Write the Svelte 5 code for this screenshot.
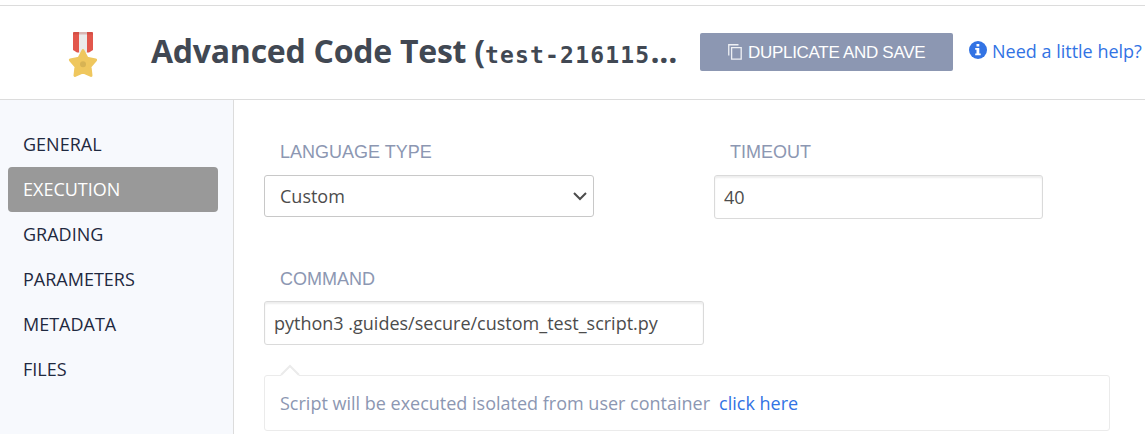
<script>
  const sections = ['GENERAL', 'EXECUTION', 'GRADING', 'PARAMETERS', 'METADATA', 'FILES'];
  let active = $state('EXECUTION');
</script>

<div class="page">
  <header>
    <svg class="medal" width="30" height="46" viewBox="0 0 30 46">
      <path d="M6 0H24Q25 0 25 1V18L21 20.5H9L5 18V1Q5 0 6 0Z" fill="#e2574c" />
      <path d="M11 0H19V21H11Z" fill="#ebebeb" />
      <path d="M5.5 0H24.5L25 2.5H5Z" fill="#b43f36" opacity=".3" />
      <path d="M15 18.6L19 26.2L27.6 28L22 34.6L23 43.5L15 40L7 43.5L8 34.6L2.4 28L11 26.2Z" fill="#efc75e" stroke="#efc75e" stroke-width="3" stroke-linejoin="round" />
      <circle cx="15" cy="32.3" r="3" fill="#d7b354" />
    </svg>
    <h1>Advanced Code Test (<code>test-216115</code><span class="dots">...</span></h1>
    <button class="duplicate">
      <svg width="14" height="16" viewBox="0 0 14 16" fill="none" stroke="#fff">
        <path d="M.75 11.5V.75H10.5" stroke-width="1.3" opacity=".85" />
        <path d="M3.6 3.6H13.2V15.2H3.6Z" stroke-width="1.3" opacity=".85" />
      </svg>
      <span>DUPLICATE AND SAVE</span>
    </button>
    <a class="help" href="#help">
      <svg width="18" height="18" viewBox="0 0 18 18">
        <circle cx="9" cy="9" r="9" fill="#3273e4" />
        <path d="M7.5 3H10.3V5.5H7.5ZM6.2 7H10.3V12.5H11.7V14.2H6.2V12.5H7.5V8.7H6.2Z" fill="#fff" />
      </svg>
      <span>Need a little help?</span>
    </a>
  </header>

  <div class="body">
    <nav>
      {#each sections as name}
        <button class:active={active === name} onclick={() => (active = name)}>{name}</button>
      {/each}
    </nav>

    <main>
      <div class="row">
        <div class="field language">
          <div class="label">LANGUAGE TYPE</div>
          <div class="select">
            <span>Custom</span>
            <svg width="14" height="9" viewBox="0 0 14 9" fill="none" stroke="#4c4c4c" stroke-width="2">
              <path d="M1 1L7 7L13 1" />
            </svg>
          </div>
        </div>
        <div class="field timeout">
          <div class="label">TIMEOUT</div>
          <div class="input"><span>40</span></div>
        </div>
      </div>
      <div class="field command">
        <div class="label">COMMAND</div>
        <div class="input"><span>python3 .guides/secure/custom_test_script.py</span></div>
      </div>
      <div class="note">
        <svg class="notch" width="20" height="12" viewBox="0 0 20 12">
          <path d="M1 11L10 2L19 11V12H1Z" fill="#fff" />
          <path d="M1 11L10 2L19 11" fill="none" stroke="#ebebeb" stroke-width="2" />
        </svg>
        <span class="text">Script will be executed isolated from user container</span>
        <a href="#more">click here</a>
      </div>
    </main>
  </div>
</div>

<style>
  :global(body) { background: #fff; overflow: hidden; }
  * { box-sizing: border-box; }
  .page {
    width: 1145px;
    height: 434px;
    padding-top: 5px;
    overflow: hidden;
    display: flex;
    flex-direction: column;
    font-family: 'Open Sans', sans-serif;
    font-size: 18px;
    color: #4c4c4c;
    white-space: nowrap;
  }
  header {
    height: 95px;
    flex: none;
    border-top: 1px solid #dcdcdc;
    border-bottom: 1px solid #dcdcdc;
    display: flex;
    align-items: flex-start;
  }
  .medal { margin: 26px 0 0 68px; flex: none; }
  h1 {
    margin: 22px 0 0 53px;
    width: 549px;
    flex: none;
    font-size: 32px;
    line-height: 46px;
    font-weight: 700;
    letter-spacing: -.25px;
    color: #414853;
  }
  code { font-family: 'DejaVu Sans Mono', monospace; font-size: 23px; letter-spacing: 1.2px; }
  button { border: 0; font: inherit; text-align: left; }
  .duplicate {
    width: 253px;
    height: 38px;
    margin-top: 27px;
    padding: 0 0 0 28px;
    flex: none;
    display: flex;
    align-items: center;
    gap: 6px;
    background: #8c97b2;
    color: #fff;
    border-radius: 2px;
    font: 17px/38px 'Liberation Sans', sans-serif;
  }
  .duplicate span { padding-top: 2px; letter-spacing: -.3px; }
  a { color: #3273e4; text-decoration: none; }
  .help { display: flex; margin: 33px 0 0 16px; gap: 5px; line-height: 25px; }
  .help svg { margin-top: 2px; flex: none; }
  .body { flex: 1; display: flex; }
  nav {
    width: 234px;
    flex: none;
    padding: 22px 15px 0 8px;
    background: #f7f9fd;
    border-right: 1px solid #dcdcdc;
  }
  nav button {
    display: block;
    width: 210px;
    height: 45px;
    padding: 0 15px;
    background: none;
    border-radius: 4px;
    line-height: 45px;
    color: #1f2940;
  }
  nav button.active { background: #999; color: #fff; }
  main { padding: 40px 0 0 30px; }
  .row { display: flex; gap: 120px; }
  .label {
    height: 24px;
    padding-left: 16px;
    margin-bottom: 11px;
    font: 18px/24px 'Liberation Sans', sans-serif;
    color: #8c97b2;
  }
  .select {
    width: 330px;
    height: 42px;
    padding: 0 6px 0 15px;
    display: flex;
    align-items: center;
    justify-content: space-between;
    border: 1px solid #c8c8c8;
    border-radius: 3px;
  }
  .input {
    width: 329px;
    height: 44px;
    padding-left: 9px;
    line-height: 42px;
    border: 1px solid #dadada;
    border-radius: 3px;
    box-shadow: inset 0 2px 2px rgba(0, 0, 0, .07);
  }
  .command { margin-top: 48px; }
  .command .label { margin-bottom: 10px; }
  .command .input { width: 440px; }
  .note {
    position: relative;
    width: 846px;
    height: 56px;
    margin-top: 30px;
    padding-left: 15px;
    display: flex;
    gap: 9px;
    line-height: 54px;
    border: 1px solid #ebebeb;
    border-radius: 3px;
    color: #8c97b2;
  }
  .notch { position: absolute; left: 15px; top: -12px; }
</style>
